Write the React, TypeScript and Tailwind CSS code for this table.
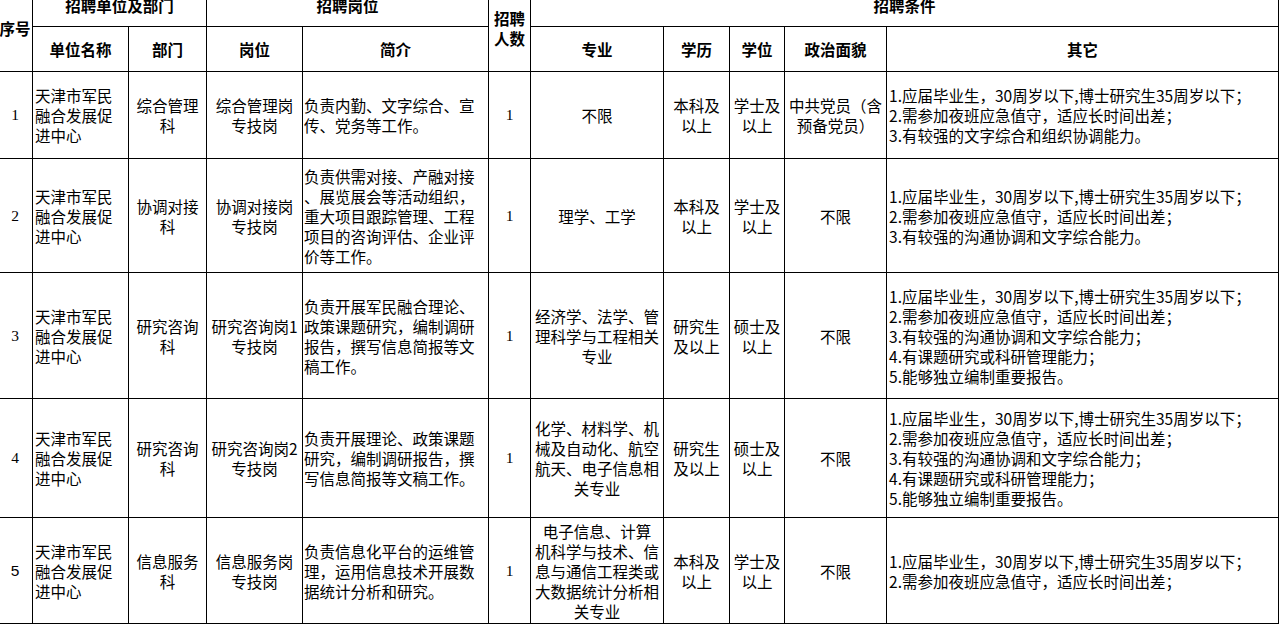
import React from "react";

type Row = {
  no: string;
  sansNo?: boolean;
  unit: string[];
  dept: string[];
  post: string[];
  desc: string[];
  count: string;
  major: string[];
  edu: string[];
  degree: string[];
  party: string[];
  other: string[];
  h: string;
};

const base3 = [
  "1.应届毕业生，30周岁以下,博士研究生35周岁以下；",
  "2.需参加夜班应急值守，适应长时间出差；",
];

const rows: Row[] = [
  {
    no: "1",
    unit: ["天津市军民", "融合发展促", "进中心"],
    dept: ["综合管理", "科"],
    post: ["综合管理岗", "专技岗"],
    desc: ["负责内勤、文字综合、宣", "传、党务等工作。"],
    count: "1",
    major: ["不限"],
    edu: ["本科及", "以上"],
    degree: ["学士及", "以上"],
    party: ["中共党员（含", "预备党员）"],
    other: [...base3, "3.有较强的文字综合和组织协调能力。"],
    h: "h-[87px]",
  },
  {
    no: "2",
    unit: ["天津市军民", "融合发展促", "进中心"],
    dept: ["协调对接", "科"],
    post: ["协调对接岗", "专技岗"],
    desc: [
      "负责供需对接、产融对接",
      "、展览展会等活动组织，",
      "重大项目跟踪管理、工程",
      "项目的咨询评估、企业评",
      "价等工作。",
    ],
    count: "1",
    major: ["理学、工学"],
    edu: ["本科及", "以上"],
    degree: ["学士及", "以上"],
    party: ["不限"],
    other: [...base3, "3.有较强的沟通协调和文字综合能力。"],
    h: "h-[114px]",
  },
  {
    no: "3",
    unit: ["天津市军民", "融合发展促", "进中心"],
    dept: ["研究咨询", "科"],
    post: ["研究咨询岗1", "专技岗"],
    desc: [
      "负责开展军民融合理论、",
      "政策课题研究，编制调研",
      "报告，撰写信息简报等文",
      "稿工作。",
    ],
    count: "1",
    major: ["经济学、法学、管", "理科学与工程相关", "专业"],
    edu: ["研究生", "及以上"],
    degree: ["硕士及", "以上"],
    party: ["不限"],
    other: [
      ...base3,
      "3.有较强的沟通协调和文字综合能力；",
      "4.有课题研究或科研管理能力；",
      "5.能够独立编制重要报告。",
    ],
    h: "h-[126px]",
  },
  {
    no: "4",
    unit: ["天津市军民", "融合发展促", "进中心"],
    dept: ["研究咨询", "科"],
    post: ["研究咨询岗2", "专技岗"],
    desc: [
      "负责开展理论、政策课题",
      "研究，编制调研报告，撰",
      "写信息简报等文稿工作。",
    ],
    count: "1",
    major: ["化学、材料学、机", "械及自动化、航空", "航天、电子信息相", "关专业"],
    edu: ["研究生", "及以上"],
    degree: ["硕士及", "以上"],
    party: ["不限"],
    other: [
      ...base3,
      "3.有较强的沟通协调和文字综合能力；",
      "4.有课题研究或科研管理能力；",
      "5.能够独立编制重要报告。",
    ],
    h: "h-[119px]",
  },
  {
    no: "5",
    sansNo: true,
    unit: ["天津市军民", "融合发展促", "进中心"],
    dept: ["信息服务", "科"],
    post: ["信息服务岗", "专技岗"],
    desc: ["负责信息化平台的运维管", "理，运用信息技术开展数", "据统计分析和研究。"],
    count: "1",
    major: [
      "电子信息、计算",
      "机科学与技术、信",
      "息与通信工程类或",
      "大数据统计分析相",
      "关专业",
    ],
    edu: ["本科及", "以上"],
    degree: ["学士及", "以上"],
    party: ["不限"],
    other: base3,
    h: "h-[106px]",
  },
];

function Lines({ lines }: { lines: string[] }) {
  return (
    <>
      {lines.map((l, i) => (
        <div key={i} className="whitespace-nowrap">
          {l}
        </div>
      ))}
    </>
  );
}

const cell = "border border-black p-0 align-middle";
const th = "border border-black p-0 align-middle text-center font-bold whitespace-nowrap";

export default function App() {
  return (
    <div className="h-[626px] w-[1279px] overflow-hidden bg-white font-['Noto_Sans_CJK_SC',sans-serif] text-[15.5px] leading-[20px] text-black">
      <table className="-ml-[3px] -mt-[17px] w-[1281px] table-fixed border-collapse">
        <colgroup>
          <col className="w-[35px]" />
          <col className="w-[96px]" />
          <col className="w-[78px]" />
          <col className="w-[96px]" />
          <col className="w-[186px]" />
          <col className="w-[42px]" />
          <col className="w-[133px]" />
          <col className="w-[66px]" />
          <col className="w-[55px]" />
          <col className="w-[102px]" />
          <col className="w-[392px]" />
        </colgroup>
        <thead>
          <tr className="h-[43px]">
            <th rowSpan={2} className={th}>
              <span className="-mx-[3px]">序号</span>
            </th>
            <th colSpan={2} className={th}>
              招聘单位及部门
            </th>
            <th colSpan={2} className={th}>
              招聘岗位
            </th>
            <th rowSpan={2} className={th}>
              <Lines lines={["招聘", "人数"]} />
            </th>
            <th colSpan={5} className={th}>
              招聘条件
            </th>
          </tr>
          <tr className="h-[45px]">
            <th className={th}>单位名称</th>
            <th className={th}>部门</th>
            <th className={th}>岗位</th>
            <th className={th}>简介</th>
            <th className={th}>专业</th>
            <th className={th}>学历</th>
            <th className={th}>学位</th>
            <th className={th}>政治面貌</th>
            <th className={th}>其它</th>
          </tr>
        </thead>
        <tbody>
          {rows.map((r) => (
            <tr key={r.no} className={r.h}>
              <td
                className={`${cell} text-center ${
                  r.sansNo
                    ? "font-['Liberation_Sans',sans-serif]"
                    : "font-['Liberation_Serif',serif]"
                }`}
              >
                {r.no}
              </td>
              <td className={`${cell} pl-[2px] text-left`}>
                <Lines lines={r.unit} />
              </td>
              <td className={`${cell} text-center`}>
                <Lines lines={r.dept} />
              </td>
              <td className={`${cell} text-center`}>
                <Lines lines={r.post} />
              </td>
              <td className={`${cell} pl-[1px] text-left`}>
                <Lines lines={r.desc} />
              </td>
              <td className={`${cell} text-center font-['Liberation_Serif',serif]`}>
                {r.count}
              </td>
              <td className={`${cell} text-center`}>
                <Lines lines={r.major} />
              </td>
              <td className={`${cell} text-center`}>
                <Lines lines={r.edu} />
              </td>
              <td className={`${cell} text-center`}>
                <Lines lines={r.degree} />
              </td>
              <td className={`${cell} text-center`}>
                <Lines lines={r.party} />
              </td>
              <td className={`${cell} pl-[2px] text-left`}>
                <Lines lines={r.other} />
              </td>
            </tr>
          ))}
        </tbody>
      </table>
    </div>
  );
}
